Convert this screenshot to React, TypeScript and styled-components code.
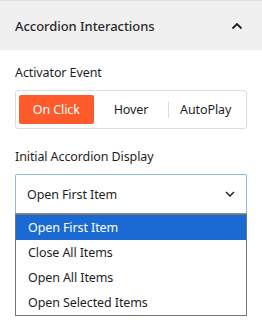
import React, { useState } from 'react';
import styled, { createGlobalStyle } from 'styled-components';

const GlobalStyle = createGlobalStyle`
  html, body {
    margin: 0;
    padding: 0;
    background: #ffffff;
  }
  body {
    font-family: "Noto Sans", "Open Sans", sans-serif;
    color: #1e1e1e;
  }
`;

const Panel = styled.div`
  width: 262px;
  height: 328px;
  background: #ffffff;
  overflow: hidden;
`;

const PanelHeader = styled.div`
  display: flex;
  align-items: center;
  justify-content: space-between;
  height: 49px;
  padding: 0 19px 0 15px;
  border-top: 1px solid #dddddd;
  background: #f0f0f0;
`;

const PanelTitle = styled.div`
  font-size: 13px;
  font-weight: 500;
  letter-spacing: -0.05px;
  color: #2a2a2a;
`;

const PanelBody = styled.div`
  display: flex;
  flex-direction: column;
  padding: 14px 15px 0;
`;

const FieldLabel = styled.div<{ spaced?: boolean }>`
  font-size: 12.5px;
  letter-spacing: -0.1px;
  line-height: 18px;
  margin-top: ${props => (props.spaced ? '19px' : '0')};
  margin-bottom: 8px;
  color: #1e1e1e;
`;

const ButtonGroup = styled.div`
  display: grid;
  grid-template-columns: repeat(3, 1fr);
  height: 39px;
  box-sizing: border-box;
  padding: 4px 3px;
  border: 1px solid #dddddd;
  border-radius: 3px;
`;

const GroupButton = styled.button<{ active?: boolean; divided?: boolean }>`
  position: relative;
  border: none;
  border-radius: 2px;
  font-family: inherit;
  font-size: 12.5px;
  letter-spacing: -0.1px;
  background: ${props => (props.active ? '#fe5a2b' : 'transparent')};
  color: ${props => (props.active ? '#ffffff' : '#1e1e1e')};
  cursor: pointer;
  padding: 0;

  &::before {
    content: '';
    display: ${props => (props.divided ? 'block' : 'none')};
    position: absolute;
    left: 0;
    top: 7px;
    bottom: 6px;
    width: 1px;
    background: #dddddd;
  }
`;

const SelectWrap = styled.div`
  position: relative;
`;

const SelectBox = styled.div`
  display: flex;
  align-items: center;
  justify-content: space-between;
  height: 40px;
  box-sizing: border-box;
  padding: 0 11px;
  border: 1px solid #8bbbe0;
  border-bottom-color: #8a8a8a;
  border-radius: 2px 2px 0 0;
  font-size: 12.5px;
  letter-spacing: -0.1px;
  color: #1e1e1e;
`;

const OptionList = styled.ul`
  position: absolute;
  left: 0;
  right: 0;
  top: 40px;
  margin: 0;
  padding: 0;
  list-style: none;
  border: 1px solid #767676;
  background: #ffffff;
`;

const Option = styled.li<{ selected?: boolean }>`
  height: 25px;
  line-height: 25px;
  padding-left: 12px;
  font-size: 12.5px;
  letter-spacing: -0.1px;
  background: ${props => (props.selected ? '#1b69d3' : '#ffffff')};
  color: ${props => (props.selected ? '#ffffff' : '#1e1e1e')};
`;

const events = ['On Click', 'Hover', 'AutoPlay'];
const displayOptions = ['Open First Item', 'Close All Items', 'Open All Items', 'Open Selected Items'];

const ChevronUp = () => (
  <svg width="12" height="8" viewBox="0 0 12 8" aria-hidden="true">
    <path d="M1.5 6.5 L6 2 L10.5 6.5" fill="none" stroke="#1e1e1e" strokeWidth="1.8" />
  </svg>
);

const ChevronDown = () => (
  <svg width="10" height="6" viewBox="0 0 10 6" aria-hidden="true">
    <path d="M1 1 L5 5 L9 1" fill="none" stroke="#1e1e1e" strokeWidth="1.4" />
  </svg>
);

export default function App() {
  const [activeEvent, setActiveEvent] = useState(0);
  const selected = 0;

  return (
    <Panel>
      <GlobalStyle />
      <PanelHeader>
        <PanelTitle>Accordion Interactions</PanelTitle>
        <ChevronUp />
      </PanelHeader>
      <PanelBody>
        <FieldLabel>Activator Event</FieldLabel>
        <ButtonGroup>
          {events.map((ev, i) => (
            <GroupButton
              key={ev}
              active={activeEvent === i}
              divided={i > 0 && activeEvent !== i && activeEvent !== i - 1}
              onClick={() => setActiveEvent(i)}
            >
              {ev}
            </GroupButton>
          ))}
        </ButtonGroup>
        <FieldLabel spaced>Initial Accordion Display</FieldLabel>
        <SelectWrap>
          <SelectBox>
            <span>{displayOptions[selected]}</span>
            <ChevronDown />
          </SelectBox>
          <OptionList>
            {displayOptions.map((opt, i) => (
              <Option key={opt} selected={i === selected}>
                {opt}
              </Option>
            ))}
          </OptionList>
        </SelectWrap>
      </PanelBody>
    </Panel>
  );
}
